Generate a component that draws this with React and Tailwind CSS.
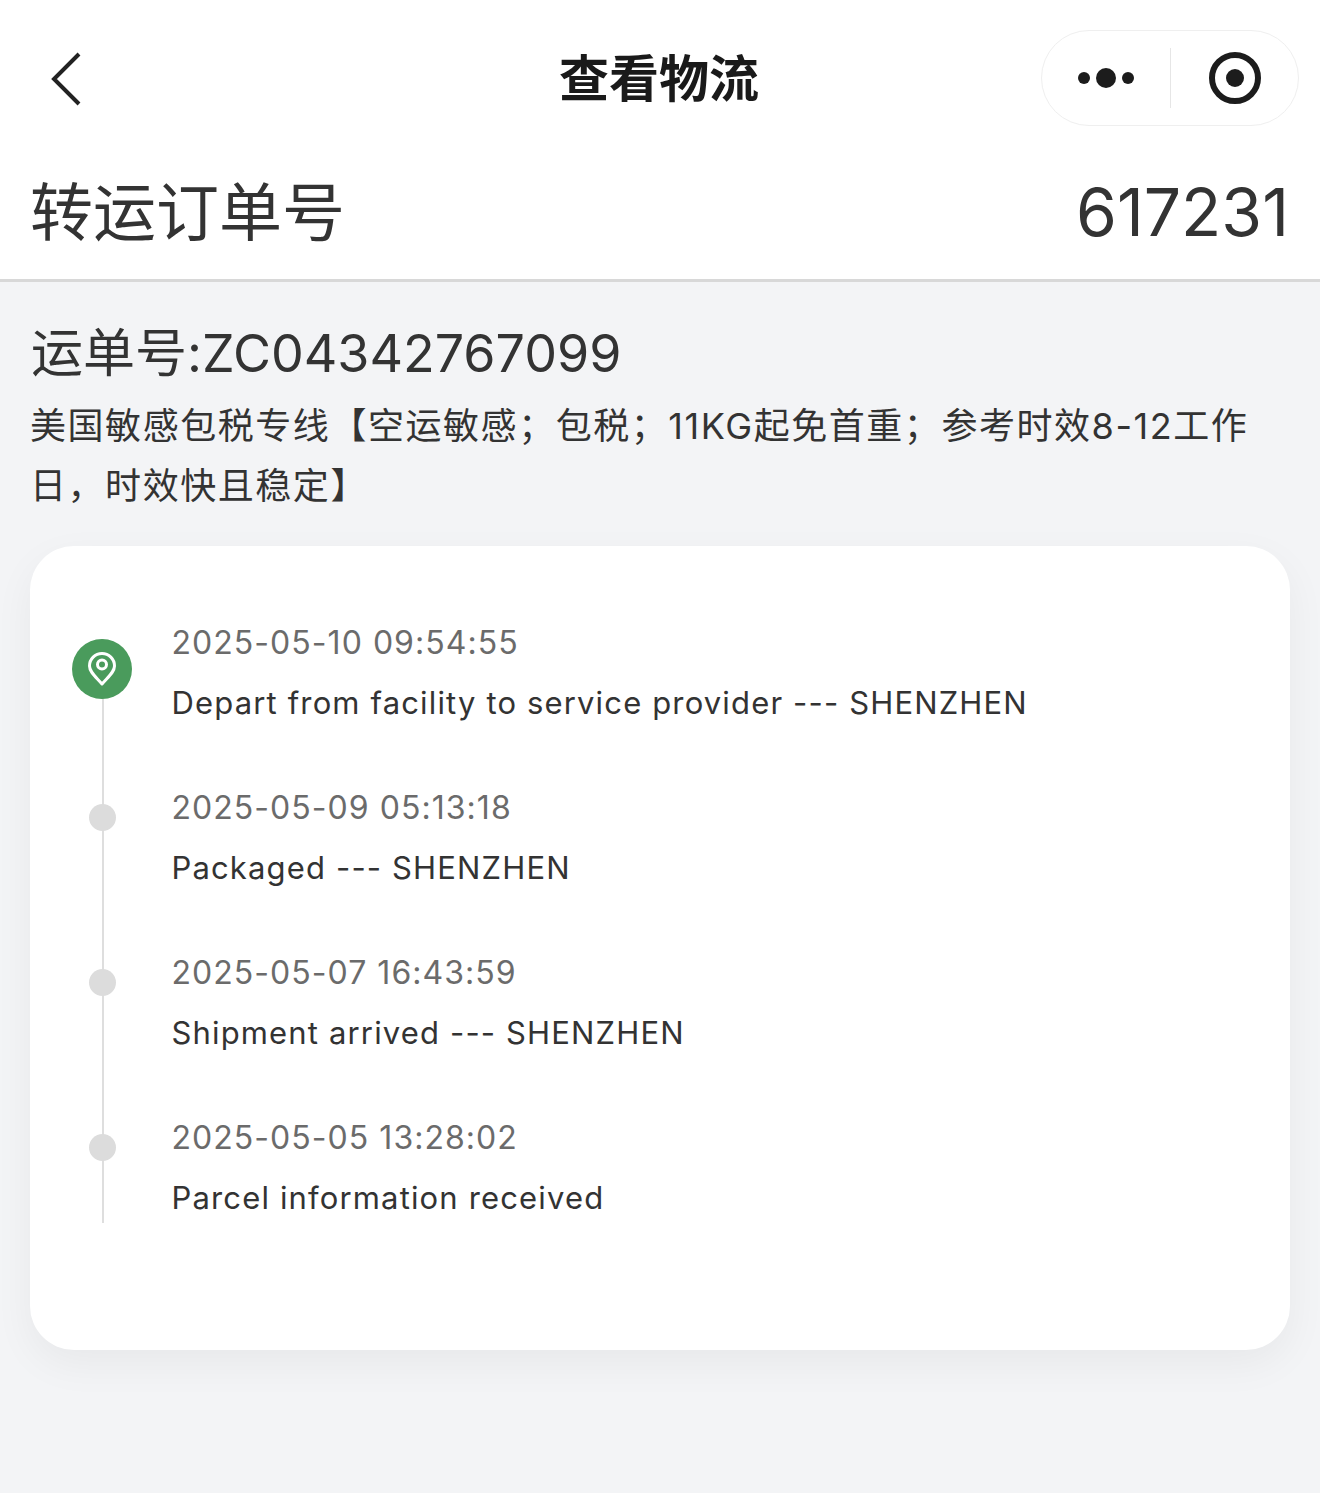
const FONT = "font-['Inter','Noto_Sans_CJK_SC',sans-serif]"

const EVENTS = [
  { time: '2025-05-10 09:54:55', text: 'Depart from facility to service provider --- SHENZHEN', current: true },
  { time: '2025-05-09 05:13:18', text: 'Packaged --- SHENZHEN' },
  { time: '2025-05-07 16:43:59', text: 'Shipment arrived --- SHENZHEN' },
  { time: '2025-05-05 13:28:02', text: 'Parcel information received', last: true },
]

function PinIcon() {
  return (
    <svg width="32" height="36" viewBox="0 0 32 36" fill="none" stroke="#fff" strokeWidth="3">
      <path d="M16 33 C10 26 3.5 21 3.5 15 A12.5 12.5 0 0 1 28.5 15 C28.5 21 22 26 16 33 Z" strokeLinejoin="round" />
      <circle cx="16" cy="13.5" r="4.5" />
    </svg>
  )
}

function TimelineItem({ event }) {
  return (
    <div className="relative h-[165px] pl-[141.5px]">
      <div className={`absolute left-[71.5px] top-[26px] w-[2px] bg-[#dedede] ${event.last ? 'h-[89px]' : 'h-[165px]'}`} />
      {event.current ? (
        <div className="absolute left-[42px] top-[26px] flex h-[60px] w-[60px] items-center justify-center rounded-full bg-[#4a9b5c]">
          <PinIcon />
        </div>
      ) : (
        <div className="absolute left-[58.5px] top-[26px] h-[27px] w-[27px] rounded-full bg-[#dcdcdc]" />
      )}
      <div className="text-[32px] leading-[60px] tracking-[1.04px] text-[#6b6b6b]">{event.time}</div>
      <div className="text-[31px] leading-[60px] tracking-[1.15px] text-[#333]">{event.text}</div>
    </div>
  )
}

export default function App() {
  return (
    <div className={`${FONT} flex min-h-[1493px] flex-col bg-[#f3f4f6] text-[#333]`}>
      {/* Nav bar */}
      <div className="relative flex h-[156px] items-center justify-center bg-white">
        <svg className="absolute left-[50px] top-[52px]" width="32" height="54" viewBox="0 0 32 54" fill="none" stroke="#222" strokeWidth="4">
          <path d="M29 2 L4 27 L29 52" />
        </svg>
        <h1 className="ml-[-2px] mt-[2px] text-[50px] font-bold leading-none text-[#1a1a1a]">查看物流</h1>
        <div className="absolute left-[1041px] top-[30px] flex h-[96px] w-[258px] items-center rounded-full border border-[#efefef] bg-white">
          <div className="flex w-[128px] items-center justify-center gap-[6px]">
            <span className="h-3 w-3 rounded-full bg-[#1c1c1c]" />
            <span className="h-5 w-5 rounded-full bg-[#1c1c1c]" />
            <span className="h-3 w-3 rounded-full bg-[#1c1c1c]" />
          </div>
          <div className="h-[60px] w-px bg-[#e6e6e6]" />
          <div className="flex flex-1 items-center justify-center">
            <div className="flex h-[52px] w-[52px] items-center justify-center rounded-full border-[6px] border-[#1c1c1c]">
              <span className="h-[18px] w-[18px] rounded-full bg-[#1c1c1c]" />
            </div>
          </div>
        </div>
      </div>

      {/* Order number */}
      <div className="flex h-[126px] items-center justify-between border-b-[3px] border-[#d8d8d8] bg-white pb-[11px] pl-[30px] pr-[31px]">
        <span className="text-[63px] leading-none">转运订单号</span>
        <span className="text-[66px] leading-none">617231</span>
      </div>

      {/* Waybill */}
      <div className="px-[30px] pt-[42px]">
        <div className="pl-px text-[52px] leading-[60px]">运单号:ZC04342767099</div>
        <p className="mt-[12px] text-[36px] leading-[60px] tracking-[1.55px]">
          美国敏感包税专线【空运敏感；包税；11KG起免首重；参考时效8-12工作日，时效快且稳定】
        </p>
      </div>

      {/* Timeline card */}
      <div className="mx-[30px] mt-[30px] h-[804px] rounded-[44px] bg-white pt-[67px] shadow-[0_14px_40px_rgba(0,0,0,0.05)]">
        {EVENTS.map((event) => (
          <TimelineItem key={event.time} event={event} />
        ))}
      </div>
    </div>
  )
}
